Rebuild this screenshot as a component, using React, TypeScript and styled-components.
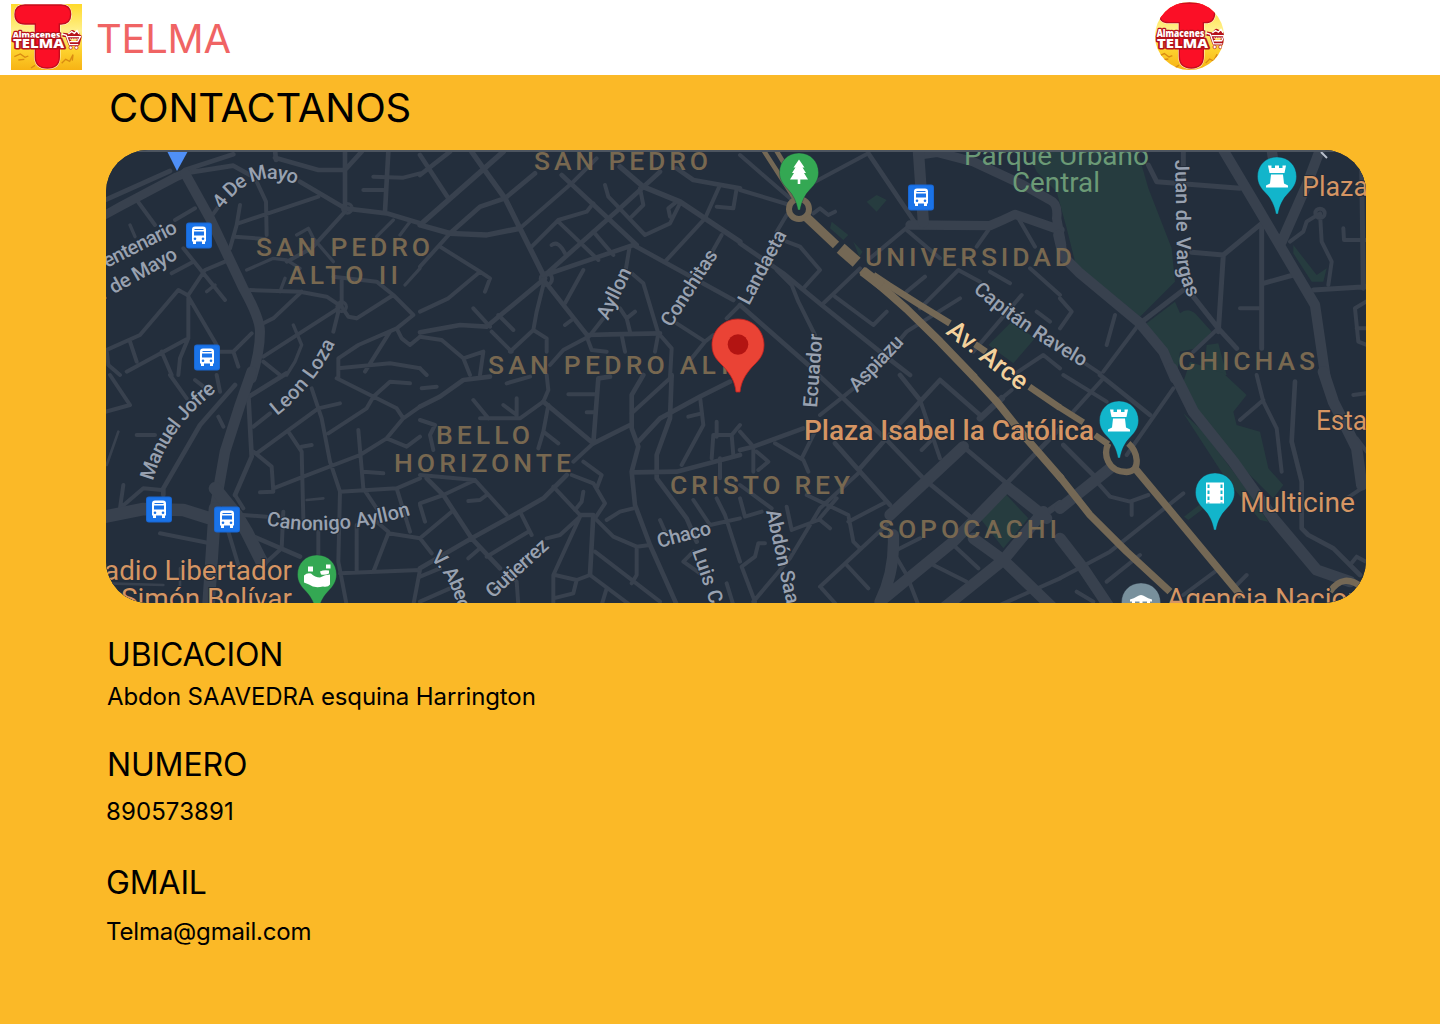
import React from "react";
import styled, { createGlobalStyle } from "styled-components";

const GlobalStyle = createGlobalStyle`
  * { box-sizing: border-box; }
  body { margin: 0; background: #fbb927; }
`;

const Page = styled.div`
  min-height: 1024px;
  background: #fbb927;
  color: #000000;
  font-family: Inter, "Liberation Sans", sans-serif;
`;

const Header = styled.header`
  display: flex;
  align-items: flex-start;
  height: 75px;
  padding: 0 216px 0 11px;
  background: #ffffff;
`;

const LogoFrame = styled.div<{ $round?: boolean }>`
  flex: none;
  width: ${(p) => (p.$round ? 69 : 71)}px;
  height: ${(p) => (p.$round ? 68 : 66)}px;
  margin-top: ${(p) => (p.$round ? 2 : 4)}px;
  margin-left: ${(p) => (p.$round ? "auto" : "0")};
  border-radius: ${(p) => (p.$round ? "50%" : "0")};
  overflow: hidden;
  svg { display: block; }
`;

const Brand = styled.span`
  margin: 15px 0 0 14px;
  color: #f06464;
  font-size: 40px;
  line-height: 48px;
  letter-spacing: -0.3px;
`;

const Main = styled.main`
  display: flex;
  flex-direction: column;
  padding: 9px 74px 0 106px;
`;

const Title = styled.h1`
  margin: 0 0 18px 3px;
  font-size: 40px;
  line-height: 48px;
  font-weight: 400;
  letter-spacing: -0.2px;
`;

const MapCard = styled.div`
  width: 1260px;
  height: 453px;
  border-radius: 42px;
  overflow: hidden;
  background: #232e3c;
  svg { display: block; }
`;

const Info = styled.section<{ $top: number; $gap: number }>`
  display: flex;
  flex-direction: column;
  gap: ${(p) => p.$gap}px;
  margin-top: ${(p) => p.$top}px;
`;

const InfoTitle = styled.h2<{ $indent?: number }>`
  margin: 0 0 0 ${(p) => p.$indent ?? 1}px;
  font-size: 32px;
  line-height: 39px;
  font-weight: 400;
  letter-spacing: -0.15px;
`;

const InfoText = styled.p<{ $indent?: number; $tracking?: number }>`
  margin: 0 0 0 ${(p) => p.$indent ?? 1}px;
  font-size: 24px;
  line-height: 29px;
  letter-spacing: ${(p) => p.$tracking ?? -0.11}px;
`;

const MapText = styled.text<{ $kind: Kind }>`
  font-family: Roboto, "Noto Sans", sans-serif;
  font-size: ${(p) => KINDS[p.$kind].size}px;
  font-weight: ${(p) => KINDS[p.$kind].weight};
  fill: ${(p) => KINDS[p.$kind].color};
  stroke: #222c39;
  stroke-width: ${(p) => (p.$kind === "district" || p.$kind === "park" ? 0 : 2)}px;
  paint-order: stroke;
`;

const LogoText = styled.text`
  font-family: "Open Sans", Lato, sans-serif;
  font-weight: 800;
  fill: #ffffff;
  stroke: #b5121b;
  stroke-linejoin: round;
  paint-order: stroke;
`;

type Kind = "district" | "park" | "poi" | "landmark" | "street" | "avenue";

const KINDS: Record<Kind, { size: number; weight: number; color: string }> = {
  district: { size: 26.5, weight: 500, color: "#786850" },
  park: { size: 27, weight: 400, color: "#6b9a76" },
  poi: { size: 28, weight: 400, color: "#d59563" },
  landmark: { size: 28, weight: 500, color: "#d59563" },
  street: { size: 20, weight: 500, color: "#98a1b0" },
  avenue: { size: 26, weight: 500, color: "#f3d19c" },
};

/* Each map tile is drawn at triple resolution. Keys are stroke widths. */
type Tile = { x: number; y: number; roads: Record<number, string>; avenues?: Record<number, string>; parks?: string };

const TILES: Tile[] = [
  {
    x: 100, y: 145,
    roads: {
      30: "M255 85L330 220L430 430Q480 520 480 560Q480 620 455 700",
      26: "M0 218L60 185L230 95L262 82",
      14: "M0 172L210 78M230 95L270 82L400 62L450 90M255 75L400 28M525 15L528 45M525 38L655 75L735 75M735 15V190M735 75L785 20M865 20L855 200M600 110L735 190L860 205L960 235",
      12: "M110 165L165 240M225 225L285 190M330 220L370 165M470 110L498 170L500 270M415 235L655 155M420 180L410 240L390 310M405 275L495 282M820 95L910 98L960 85M790 135H855M735 200L635 310L560 350M450 435L600 440L680 455L725 485M605 440L520 520L490 535M725 400V485L745 515L770 520M715 490L490 635M770 520L880 450L830 410L700 395M880 450L940 510L890 550L775 600L715 640V700M890 550L905 580L930 600L960 575M715 500L700 560M870 560L795 680M715 670L870 655L960 670M250 310L375 465M215 385L280 350M315 375L375 350M315 375L265 450V580M20 615L120 570L235 435L262 450L350 600M80 680L265 580L240 640L235 690M90 590L110 650M20 615L25 660L60 690M185 620L215 690M360 620H400L455 565M400 620L415 665M490 650L540 690",
      10: "M90 240L105 275M440 375L520 340L560 345L600 370M590 270L625 250L640 280L700 350M540 440L555 400M915 420L960 370M880 225L830 275M930 230L900 270M320 440L345 420M580 540L605 600L585 650L560 690M728 190a14 14 0 1 0 28 0a14 14 0 1 0 -28 0M711 485a14 14 0 1 0 28 0a14 14 0 1 0 -28 0",
    },
  },
  {
    x: 100, y: 375,
    roads: {
      38: "M345 400L325 700M0 428L40 420L130 402L250 405L345 435M345 340L410 420L440 470L485 560",
      32: "M455 -10L420 90L375 230L345 400",
      14: "M560 -5L430 75M445 60L455 245L405 360M405 30L300 150L190 340V360M600 545L450 480L400 440",
      12: "M350 0L360 50M405 360L430 400M430 420L500 425M210 0L260 70M285 15L330 50M30 0L90 90L0 115M355 125L370 155M110 180H165M70 330L60 400L130 340L185 345M180 475L330 505M385 470L415 570M490 570L545 520L550 410M460 155L510 115M470 235L655 100L720 85M460 230L515 275L520 350L480 352M635 40L665 130L690 260L720 350L715 560L740 690M565 170L605 230L610 430M605 215L635 210M520 340L610 305L780 240L860 190L910 130L890 100L710 10M685 175L800 100L820 65L870 20L930 25M775 165L790 340M790 290L850 295M720 350L890 340L960 310M790 340L830 400M890 340L930 470M860 190L920 215L960 185M910 130L960 95M655 470V540M770 450V590M820 590L865 475L960 490M720 595L960 585L940 690M865 470L830 440",
      8: "M55 170L20 270M620 375L670 370M20 625L190 630M240 580V640",
    },
  },
  {
    x: 420, y: 145,
    roads: {
      16: "M0 240L250 20M155 20L190 70L255 160L300 250L370 390M0 240L90 265L200 270L300 250M600 65L670 125L780 170L960 290",
      14: "M0 90L90 20M0 30L85 160M90 265L180 185L255 160L345 85M425 90L650 300M375 390L600 190L720 80M375 390L640 300L940 465M375 400L200 545L120 540L0 562M375 410L505 575M505 570L570 568L720 565M770 70L820 105L960 130",
      12: "M0 500L85 460L180 380L60 305M0 365L90 265M180 380L210 400L195 440M300 250L455 115L530 40M335 305L415 225L500 200L520 175M415 230L535 345M520 260L580 330M555 120L565 155L675 270L750 235L780 175M660 130L670 180L635 215M900 120L855 220L735 350M890 185L940 190L950 130M905 270L860 350M628 310L618 370M750 215L745 190L770 170M395 300Q415 285 435 325M375 400L350 500L340 555L270 620M160 490L210 545M235 510L280 555M490 375L435 475M455 525L435 540M215 560L275 620M340 555L380 580V620M515 565L550 520M605 570L615 620M500 575L515 615L560 620M600 490L620 520L630 560M620 520L645 500M635 385L670 415L715 565L705 620M720 570L755 610L750 700M770 535L855 590L815 640M855 590L880 570M0 575L65 585L130 640L150 690M130 640L190 620L180 690M390 660L430 615L505 575M920 520L960 480M0 670L20 690M362 402a17 17 0 1 0 34 0a17 17 0 1 0 -34 0",
    },
  },
  {
    x: 420, y: 375,
    roads: {
      14: "M0 95L60 65L130 15L210 5M370 80L520 205L535 10L570 5M520 205L630 150M670 0L635 60V160L655 215L635 290L645 390L690 510L775 700M755 0L750 130L710 240V310L800 430L830 500M655 200L720 130L840 65L930 20M640 292L770 290L960 240M20 310L70 360L155 490L240 580M0 580L155 490L300 410L370 370L440 300M480 420H520L510 600",
      12: "M5 40L50 35M260 25L330 5M380 0L385 45L370 80L300 130H180M160 75L205 130M250 90L290 120V70M385 90L370 170L355 220M370 170L415 205M445 58H525M500 112H525M520 205L460 260M635 115L755 5M840 65L850 150L785 270M805 125L845 115M890 140V185M875 250L880 180H935L940 240M935 180L960 150M900 250V310M0 135L45 150L30 180L40 225M0 300L165 315L260 420M0 385L70 360L165 315M145 378L180 375L200 360M95 410L0 490L35 535M0 390L15 440M300 410L335 480M145 550L180 520M200 545L325 470M400 335L480 420M490 350L485 380L465 405M455 300L520 325L555 385L525 430M490 260L545 300L530 340M380 490L420 480L480 425L400 600V700M510 600L470 615L405 600M510 600L630 690M470 615L460 655L400 670M525 430L580 485L650 515L690 510M650 515V600L635 625M525 530L720 680M560 435L600 410L640 400M720 435L740 480M820 375L870 450L960 430M890 370L915 420L960 560M840 595L790 560L820 530M920 625L940 690M0 680L90 640M0 605L60 580M270 600L290 620L295 690M545 690L560 640",
    },
  },
  {
    x: 740, y: 145,
    parks: "M380 170L410 150L440 165L410 200ZM275 230L325 270L310 285L270 250ZM340 290L368 320L358 335ZM745 600L815 530L885 580L820 655Z",
    roads: {
      34: "M535 15L550 230",
      28: "M510 240L750 242Q790 225 825 208L960 255M540 30L590 22L700 50L850 120L930 165Q955 175 950 220L965 300",
      14: "M385 25L530 240M0 295L130 385L245 480L445 640L510 690M0 480L205 660",
      12: "M0 30L150 160M0 135L150 180M225 110L385 25M220 205L240 190L265 210L285 200M510 240L390 340M500 255L600 340M745 255L710 305M835 220L885 305M360 370L245 480M140 290L180 305L240 375L190 430M155 420L175 470L225 570M155 420L110 375M140 210L110 260M285 455L400 540L440 500M555 395L500 440M660 460L500 560L390 690M540 490L655 375L720 410M750 380L810 415M870 370L960 450M700 620L845 450M890 500L930 530M820 690L910 630L960 670",
    },
    avenues: {
      14: "M70 15L170 170M108 15L165 110",
      18: "M147 192a30 30 0 1 0 60 0a30 30 0 1 0 -60 0",
      27: "M198 215L288 300",
      36: "M302 310L350 352",
      20: "M400 390L445 420L540 480L630 535M705 598L738 620",
      24: "M365 375L450 448L500 492L600 590L704 698",
      30: "M368 378L425 422",
    },
  },
  {
    x: 740, y: 375,
    parks: "M795 355L865 430L790 520L720 430Z",
    roads: {
      34: "M460 480Q465 590 420 680L640 500L800 335L920 430M700 490L790 555L940 700M910 410L790 555L610 700M450 420L670 215",
      20: "M720 130L785 70M910 420L960 385",
      14: "M235 0L310 70L440 195L555 315L690 425M600 15L540 80L430 200L360 280M480 0L540 75M600 15L720 120M670 215L800 325L960 160M0 225L40 215L190 160M285 205L360 290L450 390",
      12: "M240 120L310 65L390 0M785 70L815 45M540 75L600 250M545 225L570 200M0 170L40 215V290M50 230L85 260L55 285M105 205L190 255L205 290M185 250L225 170M200 360L325 420L340 500L360 520M325 440L440 380M0 330L95 400M0 370L15 425L65 410M140 395L155 465L235 435L290 370M240 435L270 460M360 290L240 400L150 550L40 680M240 635L450 440M320 570L385 640M245 640L290 690M75 505H55L45 545L5 575L45 680M470 525L540 490M465 540L500 600L535 690M640 510L715 580M580 570L680 620M960 610L780 690",
    },
    avenues: { 23: "M696 0L770 80L850 180L965 312", 20: "M868 35L960 98" },
  },
  {
    x: 1060, y: 145,
    parks: "M-100 15H232L265 130L335 310L345 410L240 515L150 440L50 370L20 250L-10 140L-70 80ZM260 535L345 470L360 505Q385 485 410 510L455 560L410 610L360 620L350 700L310 620ZM440 600L475 595L500 690L430 700ZM700 300L770 390L800 370L790 410L755 410L700 325Z",
    roads: {
      31: "M-5 270L10 335L60 385L235 530L310 620L345 700M490 15L600 200L700 370L765 480L797 700M780 15L740 120L665 290M635 15L645 80",
      15: "M240 535L370 435M475 560L490 330L395 322M605 250V610M400 455L475 550L530 610M490 330L605 235M610 415L700 390M265 60L290 110L540 130M370 15V100M905 60L910 430M760 435L920 425",
      12: "M475 550L400 620M235 540L130 680M165 510L140 600M540 490H600M690 290L730 260L740 230L780 205L785 290L815 350L805 420M766 205a14 14 0 1 0 28 0a14 14 0 1 0 -28 0M850 250L852 285H918M918 470L885 490L895 590L920 600M890 550H918M0 460L35 500L0 550M75 655L120 685",
    },
  },
  {
    x: 1060, y: 375,
    parks: "M370 20L390 -40L490 -5L560 60L520 110L530 150L600 170L625 280L670 330L640 370L560 290L400 110ZM370 115L430 170L550 330L625 440L600 435L500 315ZM372 425L420 388L432 400L385 435Z",
    roads: {
      34: "M335 -20L400 110L520 260L640 430L770 585L870 620M0 400L150 280M0 490L70 580L150 700M790 -10L820 80L890 220L905 330",
      14: "M120 0L270 120M10 210L100 300M705 20L695 200L725 320V460L745 480L820 520L900 600",
      12: "M340 40L200 240M130 10L40 110M10 0L140 80M110 320L150 365L210 380L265 360M215 380V420M370 355L150 530L0 610M140 620L240 540M370 660L465 590M520 640L560 600M590 0L610 80L650 160L665 290M540 135L610 75M880 60L918 55M860 370L905 340M870 570L890 545L918 560M890 190L920 230M50 650L100 680",
    },
    avenues: {
      19: "M-5 95L70 142M105 180L145 208M145 205C130 235 140 290 200 291Q232 290 230 255Q228 225 205 205M810 650Q850 590 910 640",
      22: "M-3 302L90 420L200 530L330 650M225 280L350 430L545 665",
    },
  },
];

const LABELS: [string, Kind, number, number, number][] = [
  ["SAN PEDRO", "district", 534, 170, 174],
  ["SAN PEDRO", "district", 256, 256, 174],
  ["ALTO II", "district", 288, 284, 110],
  ["SAN PEDRO ALT", "district", 488, 374, 245],
  ["BELLO", "district", 436, 444, 94],
  ["HORIZONTE", "district", 394, 472, 177],
  ["CRISTO REY", "district", 670, 494, 180],
  ["SOPOCACHI", "district", 878, 538, 179],
  ["UNIVERSIDAD", "district", 865, 266, 207],
  ["CHICHAS", "district", 1178, 370, 137],
  ["Parque Urbano", "park", 964, 165, 185],
  ["Central", "park", 1012, 192, 88],
  ["Plaza Isabel la Católica", "landmark", 804, 440, 290],
  ["Multicine", "poi", 1240, 512, 115],
  ["Plaza", "poi", 1302, 196, 66],
  ["Esta", "poi", 1316, 430, 51],
  ["Agencia Nacion", "poi", 1167, 608, 196],
  ["adio Libertador", "poi", 104, 580, 188],
  ["Simón Bolívar", "poi", 121, 608, 171],
];

const PATH_LABELS: [string, Kind, string, number][] = [
  ["4 De Mayo", "street", "M222 210Q255 161 304 189", 86],
  ["entenario", "street", "M107 268L190 226", 80],
  ["1 de Mayo", "street", "M100 302L195 249", 90],
  ["Leon Loza", "street", "M277 416Q320 382 341 330", 94],
  ["Manuel Jofre", "street", "M153 481Q168 425 226 384", 112],
  ["Canonigo Ayllon", "street", "M266 525Q335 540 420 512", 147],
  ["Ayllon", "street", "M608 321L636 263", 55],
  ["Conchitas", "street", "M671 328L724 246", 87],
  ["Landaeta", "street", "M749 306L792 225", 81],
  ["Ecuador", "street", "M817 408L823 325", 74],
  ["Aspiazu", "street", "M857 393L915 332", 69],
  ["Capitán Ravelo", "street", "M973 291Q1020 333 1095 374", 134],
  ["Juan de Vargas", "street", "M1175 160L1177 258Q1178 280 1194 308", 140],
  ["Av. Arce", "avenue", "M945 333L1030 399", 95],
  ["Chaco", "street", "M659 548L720 532", 55],
  ["Luis C", "street", "M692 551L714 615", 57],
  ["V. Abec", "street", "M430 559Q455 580 460 622", 60],
  ["Gutierrez", "street", "M493 599L560 538", 77],
  ["Abdón Saa", "street", "M766 511L789 615", 96],
];

const RoadMap = () => (
  <svg width="1260" height="453" viewBox="106 150 1260 453" role="img">
    <rect x="106" y="150" width="1260" height="453" fill="#232e3c" />
    {TILES.map((t, i) => (
      <g key={`p${i}`} transform={`translate(${t.x} ${t.y}) scale(0.33333)`}>
        {t.parks && <path d={t.parks} fill="#263c3f" />}
      </g>
    ))}
    {TILES.map((t, i) => (
      <g key={`r${i}`} transform={`translate(${t.x} ${t.y}) scale(0.33333)`} fill="none" stroke="#38414e" strokeLinejoin="round" strokeLinecap="round">
        {Object.entries(t.roads).map(([w, d]) => <path key={w} d={d} strokeWidth={w} />)}
      </g>
    ))}
    {TILES.filter((t) => t.avenues).map((t, i) => (
      <g key={`a${i}`} transform={`translate(${t.x} ${t.y}) scale(0.33333)`} fill="none" stroke="#746855" strokeLinejoin="round">
        {Object.entries(t.avenues!).map(([w, d]) => <path key={w} d={d} strokeWidth={w} />)}
      </g>
    ))}
    {LABELS.map(([s, kind, x, y, w], i) => (
      <MapText key={i} $kind={kind} x={x} y={y} textLength={w} lengthAdjust={kind === "district" ? "spacing" : "spacingAndGlyphs"}>{s}</MapText>
    ))}
    {PATH_LABELS.map(([s, kind, d, w], i) => (
      <g key={i}>
        <path id={`street-${i}`} d={d} fill="none" />
        <MapText $kind={kind}><textPath href={`#street-${i}`} textLength={w}>{s}</textPath></MapText>
      </g>
    ))}
    <path d="M167 151H188L177 171Z" fill="#4f8ff7" />
    <path d="M1321 152L1327 158" stroke="#b9c0cc" strokeWidth="2" />
    <Bus x={199} y={235.5} />
    <Bus x={207} y={357.5} />
    <Bus x={159} y={509.5} />
    <Bus x={227} y={519.5} />
    <Bus x={921} y={197.5} />
    <Pin x={799} y={172.5} color="#34a853">
      <path d="M0 -13L5.5 -5H3.5L7 0.5H5L9 7H1.3V11.5H-1.3V7H-9L-5 0.5H-7L-3.5 -5H-5.5Z" />
    </Pin>
    <Pin x={317} y={574.5} color="#34a853">
      <path d="M-13 1Q-10 -2 -6 -1Q-2 3 3 3Q8 0 13 0V10Q11 13 6 12Q-3 14 -8 10L-13 8ZM-9 -8H-4V-3H-9ZM9 -10H13.5V-6H9ZM3 -3Q7 -5 12 -4V-1Q8 1 4 0Z" />
    </Pin>
    <Pin x={1277} y={176.5} color="#12b5cb"><Rook /></Pin>
    <Pin x={1119} y={420.5} color="#12b5cb"><Rook /></Pin>
    <Pin x={1215} y={492.5} color="#12b5cb">
      <path d="M-9 -10H9V11H-9Z" />
      <path d="M-6.5 -8V11M6.5 -8V11" stroke="#12b5cb" strokeWidth="2" strokeDasharray="3.5 2.5" />
    </Pin>
    <Pin x={1141} y={602.5} color="#78909c">
      <path d="M-11 -3Q-7 -4 -4 -6Q0 -9 4 -6Q7 -4 11 -3V-1H-11ZM-9 -1H-6V6H-9ZM-1.5 -1H1.5V6H-1.5ZM6 -1H9V6H6Z" />
    </Pin>
    <path d="M738 319C723 319 712 331 712 345C712 356 718 361 724 367C731 375 735 382 736 392H740C741 382 745 375 752 367C758 361 764 356 764 345C764 331 753 319 738 319Z" fill="#ea4335" stroke="#c5221f" strokeWidth="0.8" />
    <circle cx="738" cy="344.5" r="10.3" fill="#b31412" />
    <rect x="106" y="150" width="1260" height="2" fill="#4c545f" />
  </svg>
);

const Rook = () => (
  <path d="M-9 -11H-5.5V-8.5H-2V-11H2V-8.500H5.5V-11H9L7.5 -3.5H-7.5ZM-6 -2H6L7 7L11 9V11H-11V9L-7 7Z" />
);

const Pin = ({ x, y, color, children }: { x: number; y: number; color: string; children: React.ReactNode }) => (
  <g transform={`translate(${x} ${y})`}>
    <path d="M0 -19.5C-11.5 -19.5 -19.5 -11 -19.5 0C-19.5 7 -16 12 -11 17C-6 22 -2.5 29 -1 37.5H1C2.5 29 6 22 11 17C16 12 19.5 7 19.5 0C19.5 -11 11.5 -19.5 0 -19.5Z" fill={color} stroke="#232e3c" strokeOpacity="0.35" strokeWidth="1" />
    <g fill="#ffffff">{children}</g>
  </g>
);

const Bus = ({ x, y }: { x: number; y: number }) => (
  <g transform={`translate(${x} ${y})`}>
    <rect x="-13" y="-13" width="26" height="26" rx="3" fill="#1967d2" />
    <rect x="-12" y="-12" width="24" height="24" rx="2" fill="#1a73e8" />
    <path d="M-7 -6Q-7 -9 -4 -9H4Q7 -9 7 -6V6H6V8.5H3V6H-3V8.5H-6V6H-7Z" fill="#ffffff" />
    <path d="M-4.5 -6H4.5" stroke="#1a73e8" strokeWidth="1" />
    <path d="M-5 -4H5V0H-5Z" fill="#1a73e8" />
    <circle cx="-4" cy="3.3" r="1.3" fill="#1a73e8" />
    <circle cx="4" cy="3.3" r="1.3" fill="#1a73e8" />
  </g>
);

const T_SHAPE = "M42 3H150Q179 3 179 31Q179 60 150 60H145V158Q145 192 109 192Q73 192 73 158V60H42Q12 60 12 31Q12 3 42 3Z";

const Logo = ({ width, height, id }: { width: number; height: number; id: string }) => (
  <svg width={width} height={height} viewBox="0 0 213 198" preserveAspectRatio="none" role="img">
    <defs>
      <linearGradient id={id} x1="0" y1="0" x2="0" y2="1">
        <stop offset="0" stopColor="#ffd92a" />
        <stop offset="0.4" stopColor="#fff08a" />
        <stop offset="0.7" stopColor="#fdd22e" />
        <stop offset="1" stopColor="#f7b315" />
      </linearGradient>
    </defs>
    <rect width="213" height="198" fill={`url(#${id})`} />
    <path d="M10 158L28 150L42 160L52 156M22 168L40 166M152 178L164 166L176 172L186 152L184 170M60 192L72 184" fill="none" stroke="#d98b12" strokeWidth="4" />
    <path d={T_SHAPE} fill="#fb0f26" stroke="#fff8d8" strokeWidth="7" />
    <path d={T_SHAPE} fill="#fb0f26" stroke="#c30d1c" strokeWidth="4" />
    <path d="M155 92L168 94L178 120H200L206 98H172L184 84L204 94" fill="none" stroke="#b5121b" strokeWidth="12" strokeLinejoin="round" />
    <path d="M153 90L166 94L176 122H202M170 98H208L200 113H176M172 90L182 83L190 88L198 80L204 90" fill="none" stroke="#ffffff" strokeWidth="4" />
    <path d="M176 105H203" stroke="#ffffff" strokeWidth="3" strokeDasharray="4 3" />
    <circle cx="179" cy="131" r="5" fill="#ffffff" stroke="#b5121b" strokeWidth="2" />
    <circle cx="196" cy="131" r="5" fill="#ffffff" stroke="#b5121b" strokeWidth="2" />
    <LogoText x="5" y="102" fontSize="28" strokeWidth="8" textLength="143" lengthAdjust="spacingAndGlyphs">Almacenes</LogoText>
    <LogoText x="6" y="133" fontSize="35" strokeWidth="9" textLength="153" lengthAdjust="spacingAndGlyphs">TELMA</LogoText>
  </svg>
);

export default function App() {
  return (
    <Page>
      <GlobalStyle />
      <Header>
        <LogoFrame><Logo width={71} height={66} id="logo-square" /></LogoFrame>
        <Brand>TELMA</Brand>
        <LogoFrame $round><Logo width={71} height={68} id="logo-round" /></LogoFrame>
      </Header>
      <Main>
        <Title>CONTACTANOS</Title>
        <MapCard><RoadMap /></MapCard>
        <Info $top={32} $gap={8}>
          <InfoTitle>UBICACION</InfoTitle>
          <InfoText>Abdon SAAVEDRA esquina Harrington</InfoText>
        </Info>
        <Info $top={34} $gap={13}>
          <InfoTitle>NUMERO</InfoTitle>
          <InfoText $indent={0} $tracking={0.1}>890573891</InfoText>
        </Info>
        <Info $top={37} $gap={15}>
          <InfoTitle $indent={0}>GMAIL</InfoTitle>
          <InfoText $indent={0} $tracking={-0.17}>Telma@gmail.com</InfoText>
        </Info>
      </Main>
    </Page>
  );
}
